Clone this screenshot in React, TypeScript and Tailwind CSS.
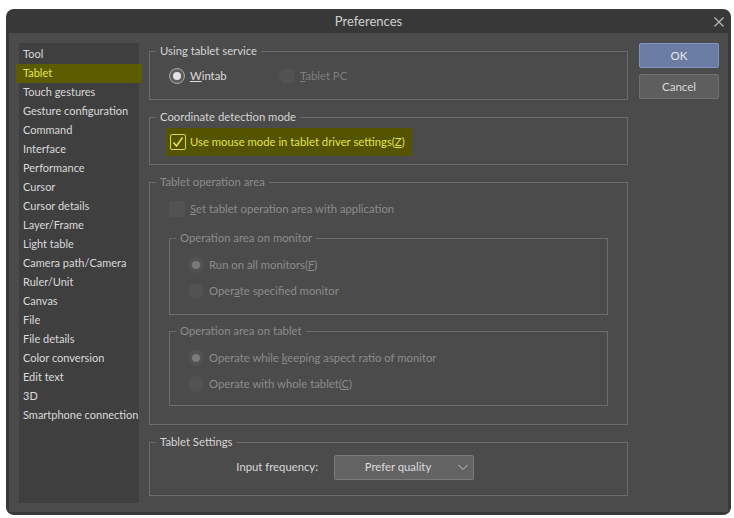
import React from "react";

const font = { fontFamily: 'Lato, "Liberation Sans", sans-serif' };

const items = [
  "Tool",
  "Tablet",
  "Touch gestures",
  "Gesture configuration",
  "Command",
  "Interface",
  "Performance",
  "Cursor",
  "Cursor details",
  "Layer/Frame",
  "Light table",
  "Camera path/Camera",
  "Ruler/Unit",
  "Canvas",
  "File",
  "File details",
  "Color conversion",
  "Edit text",
  "3D",
  "Smartphone connection",
];

function Radio({ checked, disabled }: { checked?: boolean; disabled?: boolean }) {
  if (disabled) {
    return (
      <span className="flex h-[16px] w-[16px] shrink-0 items-center justify-center rounded-full bg-[#525252]">
        {checked && <span className="h-[8px] w-[8px] rounded-full bg-[#7a7a7a]" />}
      </span>
    );
  }
  return (
    <span className="flex h-[16px] w-[16px] shrink-0 items-center justify-center rounded-full border border-[#a8a8a8] bg-[#5e5e5e]">
      {checked && <span className="h-[8px] w-[8px] rounded-full bg-[#e2e2e2]" />}
    </span>
  );
}

function Group({
  title,
  className,
  children,
  disabled,
}: {
  title: string;
  className?: string;
  children?: React.ReactNode;
  disabled?: boolean;
}) {
  return (
    <fieldset className={"border border-[#6c6c6c] " + (className ?? "")}>
      <legend
        className={
          "ml-[6px] px-[4px] text-[11.3px] leading-[16px] " +
          (disabled ? "text-[#8c8c8c]" : "text-[#d6d6d6]")
        }
      >
        {title}
      </legend>
      {children}
    </fieldset>
  );
}

export default function App() {
  return (
    <div className="h-[518px] w-[734px] bg-white pl-[6px] pt-[9px]" style={font}>
      <div className="flex h-[506px] w-[725px] flex-col overflow-hidden rounded-[8px] bg-[#383838]">
        <div className="relative flex h-[24px] shrink-0 items-center justify-center pt-[1px]">
          <span className="text-[13px] text-[#cfcfcf]">Preferences</span>
          <svg
            className="absolute right-[6px] top-[7px]"
            width="12"
            height="12"
            viewBox="0 0 12 12"
          >
            <path d="M1.5 1.5 L10.5 10.5 M10.5 1.5 L1.5 10.5" stroke="#bdbdbd" strokeWidth="1.1" />
          </svg>
        </div>
        <div className="mx-[3px] mb-[3px] flex flex-1 gap-[10px] bg-[#4b4b4b] px-[10px] pb-[9px] pt-[10px]">
          {/* sidebar */}
          <div className="w-[120px] shrink-0 bg-[#3f3f3f] pt-[2px]">
            {items.map((it) =>
              it === "Tablet" ? (
                <div
                  key={it}
                  className="-mx-[3px] flex h-[19px] items-center bg-[#5b5b00] pl-[7px] text-[11px] text-[#e6e650]"
                >
                  {it}
                </div>
              ) : (
                <div
                  key={it}
                  className="flex h-[19px] items-center whitespace-nowrap pl-[4px] text-[11px] text-[#dadada]"
                >
                  {it}
                </div>
              )
            )}
          </div>

          {/* main */}
          <div className="flex w-[479px] shrink-0 flex-col text-[11.3px]">
            <Group title="Using tablet service" className="h-[57px]">
              <div className="flex items-center pl-[19px] pt-[7px]">
                <div className="flex h-[20px] w-[110px] items-center gap-[5px] text-[#dadada]">
                  <Radio checked />
                  <span>
                    <u>W</u>intab
                  </span>
                </div>
                <div className="flex h-[20px] items-center gap-[5px] text-[#7e7e7e]">
                  <Radio disabled />
                  <span>
                    <u>T</u>ablet PC
                  </span>
                </div>
              </div>
            </Group>

            <Group title="Coordinate detection mode" className="mt-[9px] h-[56px]">
              <div className="pl-[16px] pt-[3px]">
                <div className="flex h-[28px] w-[246px] items-center gap-[4px] whitespace-nowrap bg-[#545400] pl-[4px] text-[#e2e24a]">
                  <span className="flex h-[16px] w-[16px] shrink-0 items-center justify-center rounded-[2px] border border-[#d8d840]">
                    <svg width="12" height="12" viewBox="0 0 12 12">
                      <path d="M1.5 6.5 L4.5 10 L10.5 1.5" fill="none" stroke="#e8e84a" strokeWidth="1.5" />
                    </svg>
                  </span>
                  <span>
                    Use mouse mode in tablet driver settings(<u>Z</u>)
                  </span>
                </div>
              </div>
            </Group>

            <Group title="Tablet operation area" className="mt-[9px] h-[251px]" disabled>
              <div className="px-[19px] pt-[9px]">
                <div className="flex h-[20px] items-center gap-[5px] text-[#8c8c8c]">
                  <span className="h-[16px] w-[16px] rounded-[2px] bg-[#525252]" />
                  <span>
                    <u>S</u>et tablet operation area with application
                  </span>
                </div>
              </div>
              <div className="pl-[19px] pr-[19px]">
                <Group title="Operation area on monitor" className="mt-[11px] h-[85px]" disabled>
                  <div className="flex flex-col gap-[6px] pl-[18px] pt-[9px] text-[#8c8c8c]">
                    <div className="flex h-[20px] items-center gap-[5px]">
                      <Radio checked disabled />
                      <span>
                        Run on all monitors(<u>F</u>)
                      </span>
                    </div>
                    <div className="flex h-[20px] items-center gap-[5px]">
                      <Radio disabled />
                      <span>
                        Oper<u>a</u>te specified monitor
                      </span>
                    </div>
                  </div>
                </Group>
                <Group title="Operation area on tablet" className="mt-[8px] h-[83px]" disabled>
                  <div className="flex flex-col gap-[6px] pl-[18px] pt-[9px] text-[#8c8c8c]">
                    <div className="flex h-[20px] items-center gap-[5px]">
                      <Radio checked disabled />
                      <span>
                        Operate while <u>k</u>eeping aspect ratio of monitor
                      </span>
                    </div>
                    <div className="flex h-[20px] items-center gap-[5px]">
                      <Radio disabled />
                      <span>
                        Operate with whole tablet(<u>C</u>)
                      </span>
                    </div>
                  </div>
                </Group>
              </div>
            </Group>

            <Group title="Tablet Settings" className="mt-[9px] h-[62px]">
              <div className="flex items-center pt-[5px]">
                <span className="w-[184px] pr-[16px] text-right text-[#dadada]">
                  Input frequency:
                </span>
                <div className="relative flex h-[25px] w-[140px] items-center justify-center rounded-[2px] border border-[#7a7a7a] bg-[#636363] pr-[12px] text-[#dcdcdc]">
                  Prefer quality
                  <svg className="absolute right-[5px] top-[8px]" width="10" height="7" viewBox="0 0 10 7">
                    <path d="M0.5 1 L5 5.5 L9.5 1" fill="none" stroke="#c8c8c8" strokeWidth="1" />
                  </svg>
                </div>
              </div>
            </Group>
          </div>

          {/* buttons */}
          <div className="flex flex-col gap-[6px] pl-[1px] text-[11.5px]">
            <div className="flex h-[25px] w-[80px] items-center justify-center rounded-[2px] border border-[#8194bc] bg-[#6a7ca4] text-[#e8e8e8]">
              OK
            </div>
            <div className="flex h-[25px] w-[80px] items-center justify-center rounded-[2px] border border-[#707070] bg-[#5e5e5e] text-[#dadada]">
              Cancel
            </div>
          </div>
        </div>
      </div>
    </div>
  );
}
